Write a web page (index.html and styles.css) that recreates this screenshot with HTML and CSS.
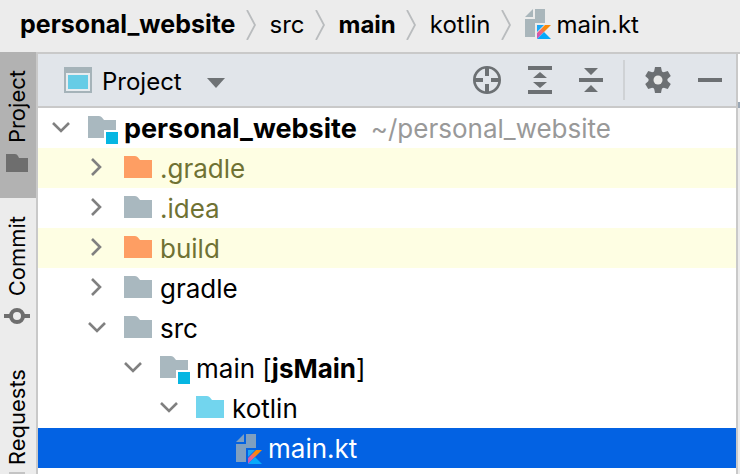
FILE: index.html
```
<!DOCTYPE html>
<html lang="en">
<head>
    <meta charset="UTF-8">
    <meta name="viewport" content="width=device-width, initial-scale=1.0">
    <title>personal_website</title>
    <link rel="stylesheet" href="styles.css">
</head>
<body>
    <!-- Shared icons -->
    <svg class="icon-defs" aria-hidden="true">
        <defs>
            <linearGradient id="kt-grad" x1="0" y1="1" x2="1" y2="0">
                <stop offset="0.15" stop-color="#c757bc"/>
                <stop offset="0.4" stop-color="#f0647a"/>
                <stop offset="0.65" stop-color="#f98909"/>
            </linearGradient>
            <symbol id="folder" viewBox="0 0 28 22">
                <path d="M0 0h11q2 0 3 1.5L16 4h12v18H0z" fill="currentColor"/>
            </symbol>
            <symbol id="module" viewBox="0 0 30 28">
                <path d="M0 0h11q2 0 3 1.5L16 4h12v10H16v8H0z" fill="currentColor"/>
                <rect x="18" y="16" width="12" height="12" fill="#06b6e2"/>
            </symbol>
            <symbol id="kotlin-file" viewBox="0 0 26 30">
                <path d="M0 8L8 0v8z" fill="currentColor"/>
                <path d="M10 0h10v14h-10v14H0V10h10z" fill="currentColor"/>
                <path d="M12 16h7l-7 7z" fill="#1ba6f5"/>
                <path d="M12 24l8-8h6L12 30z" fill="url(#kt-grad)"/>
                <path d="M12 30l7-7 7 7z" fill="#07a9fa"/>
            </symbol>
            <symbol id="arrow-down" viewBox="0 0 26 20">
                <path d="M5 6l8 8 8-8" fill="none" stroke="#808080" stroke-width="2.6"/>
            </symbol>
            <symbol id="arrow-right" viewBox="0 0 26 20">
                <path d="M8 2l8 8-8 8" fill="none" stroke="#808080" stroke-width="2.6"/>
            </symbol>
            <symbol id="crumb-sep" viewBox="0 0 10 30">
                <path d="M1 0l8 15-8 15" fill="none" stroke="#b9bcbe" stroke-width="1.8"/>
            </symbol>
        </defs>
    </svg>

    <nav class="breadcrumbs">
        <a href="#"><b class="project-name">personal_website</b></a>
        <svg class="sep"><use href="#crumb-sep"/></svg>
        <a href="#">src</a>
        <svg class="sep"><use href="#crumb-sep"/></svg>
        <a href="#"><b>main</b></a>
        <svg class="sep"><use href="#crumb-sep"/></svg>
        <a href="#">kotlin</a>
        <svg class="sep"><use href="#crumb-sep"/></svg>
        <a href="#" class="file-crumb"><svg class="file-icon"><use href="#kotlin-file"/></svg>main.kt</a>
    </nav>

    <div class="workspace">
        <div class="stripe">
            <button class="tab active">
                <span>Project</span>
                <svg width="22" height="18" viewBox="0 0 22 18"><path d="M0 0h9q2 0 3 2l1 2h9v14H0z" fill="#6e6e6e"/></svg>
            </button>
            <button class="tab">
                <span>Commit</span>
                <svg width="26" height="18" viewBox="0 0 26 18"><path d="M0 9h7M19 9h7" stroke="#6e6e6e" stroke-width="4"/><circle cx="13" cy="9" r="6" fill="none" stroke="#6e6e6e" stroke-width="4"/></svg>
            </button>
            <button class="tab requests">
                <span>Requests</span>
                <svg width="16" height="16" viewBox="0 0 16 16"><path d="M0 0h16v16H0z" fill="#c4c4c4"/></svg>
            </button>
        </div>

        <div class="panel">
            <div class="panel-header">
                <label class="view">
                    <svg width="28" height="26" viewBox="0 0 28 26">
                        <path d="M0 0h28v26H0z" fill="#a5b3b9"/>
                        <path d="M2 6h24v18H2z" fill="#e8ecef"/>
                        <path d="M4 8h20v14H4z" fill="#66cce6"/>
                    </svg>
                    <select aria-label="View">
                        <option>Project</option>
                    </select>
                    <svg class="caret" width="18" height="10" viewBox="0 0 18 10"><path d="M0 0h18l-9 10z" fill="#6e7275"/></svg>
                </label>
                <div class="tools">
                    <button aria-label="Select opened file">
                        <svg width="28" height="28" viewBox="0 0 28 28" fill="none" stroke="#6c7073">
                            <circle cx="14" cy="14" r="12.700" stroke-width="2.6"/>
                            <path d="M14 2v8M14 18v8M2 14h8M18 14h8" stroke-width="4"/>
                        </svg>
                    </button>
                    <button aria-label="Expand all">
                        <svg width="24" height="28" viewBox="0 0 24 28" fill="#6c7073">
                            <path d="M0 0h24v4H0zM0 24h24v4H0zM5 12l7-6 7 6zM5 16h14l-7 6z"/>
                        </svg>
                    </button>
                    <button aria-label="Collapse all">
                        <svg width="24" height="28" viewBox="0 0 24 28" fill="#6c7073">
                            <path d="M0 12h24v4H0zM5 2h14l-7 7zM5 26l7-7 7 7z"/>
                        </svg>
                    </button>
                    <span class="divider"></span>
                    <button aria-label="Settings">
                        <svg width="26" height="26" viewBox="0 0 26 26" fill="#6c7073">
                            <circle cx="13" cy="13" r="9.500"/>
                            <path id="tooth" d="M10 0h6l1 5v16l-1 5h-6l-1-5V5z"/>
                            <use href="#tooth" transform="rotate(60 13 13)"/>
                            <use href="#tooth" transform="rotate(120 13 13)"/>
                            <circle cx="13" cy="13" r="4.500" fill="#e8e9e8"/>
                        </svg>
                    </button>
                    <button aria-label="Hide">
                        <svg width="24" height="28" viewBox="0 0 24 28"><path d="M0 12h24v4H0z" fill="#6c7073"/></svg>
                    </button>
                </div>
            </div>

            <ul class="tree">
                <li class="row">
                    <svg class="arrow"><use href="#arrow-down"/></svg>
                    <svg class="module"><use href="#module"/></svg>
                    <b class="project-name">personal_website</b><span class="path">~/personal_website</span>
                </li>
                <li class="row level-1 excluded">
                    <svg class="arrow"><use href="#arrow-right"/></svg>
                    <svg class="folder"><use href="#folder"/></svg>
                    <span class="ignored">.gradle</span>
                </li>
                <li class="row level-1">
                    <svg class="arrow"><use href="#arrow-right"/></svg>
                    <svg class="folder"><use href="#folder"/></svg>
                    <span class="ignored">.idea</span>
                </li>
                <li class="row level-1 excluded">
                    <svg class="arrow"><use href="#arrow-right"/></svg>
                    <svg class="folder"><use href="#folder"/></svg>
                    <span class="ignored">build</span>
                </li>
                <li class="row level-1">
                    <svg class="arrow"><use href="#arrow-right"/></svg>
                    <svg class="folder"><use href="#folder"/></svg>
                    <span>gradle</span>
                </li>
                <li class="row level-1">
                    <svg class="arrow"><use href="#arrow-down"/></svg>
                    <svg class="folder"><use href="#folder"/></svg>
                    <span>src</span>
                </li>
                <li class="row level-2">
                    <svg class="arrow"><use href="#arrow-down"/></svg>
                    <svg class="module"><use href="#module"/></svg>
                    <span>main [<b>jsMain</b>]</span>
                </li>
                <li class="row level-3 source">
                    <svg class="arrow"><use href="#arrow-down"/></svg>
                    <svg class="folder"><use href="#folder"/></svg>
                    <span>kotlin</span>
                </li>
                <li class="row level-4 selected">
                    <svg class="file-icon"><use href="#kotlin-file"/></svg>
                    <span>main.kt</span>
                </li>
            </ul>
        </div>

        <div class="editor">
            <div class="editor-tab"></div>
        </div>
    </div>
</body>
</html>
```
FILE: styles.css
```
* {
    box-sizing: border-box;
    margin: 0;
    padding: 0;
}

body {
    height: 100vh;
    display: flex;
    flex-direction: column;
    overflow: hidden;
    background: #ececec;
    color: #000;
    font-family: Inter, "Liberation Sans", sans-serif;
    font-size: 26px;
}

svg {
    display: block;
    flex: none;
}

b {
    font-weight: 700;
}

button {
    border: none;
    background: none;
    font: inherit;
    color: inherit;
    cursor: pointer;
}

.icon-defs {
    position: absolute;
    width: 0;
    height: 0;
}

/* Breadcrumbs */
.breadcrumbs {
    flex: none;
    display: flex;
    align-items: center;
    height: 54px;
    padding: 0 20px 4px;
    border-bottom: 2px solid #c9c9c9;
    font-size: 24px;
    white-space: nowrap;
}

.breadcrumbs a {
    color: inherit;
    text-decoration: none;
}

.breadcrumbs .project-name {
    font-size: 25px;
}

.sep {
    width: 10px;
    height: 30px;
    margin: 2px 14px 0 10px;
}

.file-crumb {
    display: flex;
    align-items: center;
    gap: 6px;
}

.file-icon {
    width: 26px;
    height: 30px;
    color: #a9b6bb;
}

.workspace {
    flex: 1;
    display: flex;
    min-height: 0;
}

/* Left tool stripe */
.stripe {
    flex: none;
    width: 38px;
    margin-top: -2px;
    overflow: hidden;
    border-right: 2px solid #c9c9c9;
}

.tab {
    display: flex;
    flex-direction: column;
    align-items: center;
    gap: 11px;
    width: 100%;
    padding: 18px 2px 26px 0;
    font-size: 22px;
    line-height: 26px;
}

.tab.active {
    background: #b2b2b2;
}

.tab span {
    writing-mode: vertical-rl;
    transform: rotate(180deg);
}

.tab.requests {
    gap: 6px;
}

/* Project panel */
.panel {
    flex: 1;
    min-width: 0;
    background: #fff;
    border-right: 2px solid #c9c9c9;
}

.panel-header {
    display: flex;
    justify-content: space-between;
    align-items: center;
    height: 54px;
    padding: 0 14px 0 26px;
    background: #e1e5ea;
    border-bottom: 2px solid #c9c9c9;
}

.view {
    position: relative;
    display: flex;
    align-items: center;
    gap: 10px;
}

.view select {
    appearance: none;
    border: none;
    background: none;
    font: inherit;
    font-size: 24px;
    color: inherit;
    padding: 2px 43px 0 0;
}

.caret {
    position: absolute;
    right: 0;
    top: 50%;
    margin-top: -2px;
    pointer-events: none;
}

.tools {
    display: flex;
    align-items: center;
    gap: 27px;
}

.divider {
    width: 2px;
    height: 40px;
    margin: 0 -7px;
    background: #cfd2d5;
}

/* Tree */
.tree {
    list-style: none;
}

.row {
    display: flex;
    align-items: center;
    height: 40px;
    padding: 2px 0 0 10px;
    line-height: 38px;
    white-space: nowrap;
}

.level-1 { padding-left: 46px; }
.level-2 { padding-left: 82px; }
.level-3 { padding-left: 118px; }
.level-4 { padding-left: 198px; }

.arrow {
    width: 26px;
    height: 20px;
    margin: 0 14px 4px 0;
}

.folder {
    width: 28px;
    height: 22px;
    margin: 0 8px 4px 0;
    color: #a9b8bf;
}

.module {
    width: 30px;
    height: 28px;
    margin: 2px 6px 0 0;
    color: #a9b8bf;
}

.tree .project-name {
    font-size: 27px;
}

.path {
    margin-left: 14px;
    color: #999;
}

.excluded {
    background: #fefee3;
}

.excluded .folder {
    color: #fe9e63;
}

.ignored {
    color: #6f7234;
}

.source .folder {
    color: #72d5ee;
}

.selected {
    background: #0362e3;
    color: #fff;
}

.selected .file-icon {
    margin-right: 6px;
    color: #7f9fc0;
}

/* Edge of the editor */
.editor {
    flex: none;
    width: 2px;
    background: #ececec;
}

.editor-tab {
    height: 54px;
    background: #fff;
    border-bottom: 6px solid #9aa7b5;
}
```
